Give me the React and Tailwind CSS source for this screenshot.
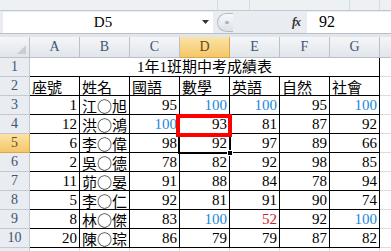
import React from "react";

const heads = ["座號", "姓名", "國語", "數學", "英語", "自然", "社會"];
const rows = [
  ["1", "江○旭", "95", "100", "100", "95", "100"],
  ["12", "洪○鴻", "100", "93", "81", "87", "92"],
  ["6", "李○偉", "98", "92", "97", "89", "66"],
  ["2", "吳○德", "78", "82", "92", "98", "85"],
  ["11", "茆○晏", "91", "88", "84", "78", "94"],
  ["5", "李○仁", "92", "81", "91", "90", "74"],
  ["8", "林○傑", "83", "100", "52", "92", "100"],
  ["20", "陳○琮", "86", "79", "79", "87", "82"],
];
const letters = ["A", "B", "C", "D", "E", "F", "G"];

function scoreColor(v) {
  const n = Number(v);
  if (n === 100) return "text-[#2388da]";
  if (n < 60) return "text-[#c4262b]";
  return "text-black";
}

function RowHead({ n, active }) {
  return (
    <div
      className={`w-[30px] shrink-0 border-r border-b flex items-center justify-center text-[14px] leading-none ${
        active
          ? "bg-gradient-to-b from-[#fbe3a6] to-[#f4c766] border-[#dca646] text-[#6b4a17]"
          : "bg-[#e9ecf0] border-[#c3c9d1] text-[#3d5674]"
      }`}
    >
      {n}
    </div>
  );
}

export default function App() {
  return (
    <div className="w-[391px] h-[251px] overflow-hidden bg-white font-['Liberation_Serif','Noto_Sans_CJK_TC',serif]">
      {/* ribbon edge */}
      <div className="h-[11px] bg-[#eef1f4] border-b border-[#c2c9d2] flex">
        <div className="w-[218px] border-r border-[#d6dbe1]" />
        <div className="w-[32px] border-r border-[#d6dbe1]" />
        <div className="w-[100px] border-r border-[#d6dbe1]" />
        <div className="w-[30px] border-r border-[#d6dbe1]" />
      </div>

      {/* formula bar */}
      <div className="h-[22px] bg-[#e9ecf0] flex items-center">
        <div className="ml-[3px] w-[210px] h-[21px] bg-white flex items-center">
          <div className="flex-1 text-center text-[15px] leading-none pl-[2px]">D5</div>
          <svg width="9" height="6" viewBox="0 0 9 6" className="mr-[3px]">
            <path d="M1 1h7L4.5 5z" fill="#333" />
          </svg>
        </div>
        <div className="ml-[4px] w-[90px] h-[21px] flex items-center">
          <div className="w-[16px] h-[19px] rounded-l-full border border-r-0 border-[#b4bcc6] bg-gradient-to-b from-[#f7f8fa] to-[#dde2e8] flex items-center justify-center">
            <div className="w-[4px] h-[3px] rounded-full bg-[#aab2bc] ml-[3px]" />
          </div>
          <div className="flex-1" />
          <span className="italic font-bold text-[12px] leading-none text-[#333] mr-[7px] tracking-[-1px]">fx</span>
        </div>
        <div className="flex-1 h-[21px] bg-white flex items-center pl-[12px] text-[16px] leading-none">92</div>
      </div>

      <div className="h-[4px] bg-[#e2e6eb] border-t border-[#b8c0ca]" />

      {/* sheet */}
      <div className="relative">
        {/* column headers */}
        <div className="flex h-[21px]">
          <div className="w-[30px] shrink-0 border-r border-b border-[#b9c1cc] bg-gradient-to-b from-[#f5f6f8] to-[#e1e5ea] flex items-end justify-end p-[3px]">
            <svg width="9" height="9" viewBox="0 0 9 9">
              <path d="M9 0V9H0z" fill="#c9ced5" />
            </svg>
          </div>
          {letters.map((l) => (
            <div
              key={l}
              className={`w-[50px] shrink-0 border-r border-b flex items-center justify-center text-[14px] leading-none ${
                l === "D"
                  ? "bg-gradient-to-b from-[#fbe3a6] to-[#f4c766] border-[#dca646] text-[#6b4a17]"
                  : "bg-gradient-to-b from-[#f5f6f8] to-[#e1e5ea] border-[#b9c1cc] text-[#3d5674]"
              }`}
            >
              {l}
            </div>
          ))}
          <div className="w-[11px] shrink-0 border-b border-[#b9c1cc] bg-gradient-to-b from-[#f5f6f8] to-[#e1e5ea]" />
        </div>

        {/* row 1: title */}
        <div className="flex h-[19px]">
          <RowHead n="1" />
          <div className="w-[350px] shrink-0 border-r border-b border-black flex items-center justify-center text-[15px] leading-none">
            1年1班期中考成績表
          </div>
          <div className="w-[11px] shrink-0 border-b border-[#dadcdd]" />
        </div>

        {/* row 2: headings */}
        <div className="flex h-[19px]">
          <RowHead n="2" />
          {heads.map((h) => (
            <div
              key={h}
              className="w-[50px] shrink-0 border-r border-b border-black flex items-center pl-[2px] text-[15px] leading-none font-['Noto_Sans_CJK_TC',sans-serif]"
            >
              {h}
            </div>
          ))}
          <div className="w-[11px] shrink-0 border-b border-[#dadcdd]" />
        </div>

        {rows.map((r, i) => (
          <div key={i} className="flex h-[19px]">
            <RowHead n={String(i + 3)} active={i + 3 === 5} />
            {r.map((v, j) =>
              j === 1 ? (
                <div
                  key={j}
                  className="w-[50px] shrink-0 border-r border-b border-black flex items-center pl-[2px] text-[15px] leading-none font-['Noto_Sans_CJK_TC',sans-serif]"
                >
                  {v}
                </div>
              ) : (
                <div
                  key={j}
                  className={`w-[50px] shrink-0 border-r border-b border-black flex items-center justify-end pr-[2px] text-[15px] leading-none ${
                    j === 0 ? "text-black" : scoreColor(v)
                  }`}
                >
                  {v}
                </div>
              )
            )}
            <div className="w-[11px] shrink-0 border-b border-[#dadcdd]" />
          </div>
        ))}

        {/* row 11 (cut off at the window edge) */}
        <div className="flex h-[19px]">
          <RowHead n="" />
          {letters.map((l) => (
            <div key={l} className="w-[50px] shrink-0 border-r border-[#dadcdd]" />
          ))}
        </div>

        {/* active cell D5 */}
        <div className="absolute left-[178px] top-[96px] w-[53px] h-[21px] border-2 border-black" />
        <div className="absolute left-[227px] top-[113px] w-[6px] h-[6px] bg-black border border-white" />

        {/* red highlight around D4 */}
        <div className="absolute left-[176px] top-[77px] w-[56px] h-[23px] border-4 border-[#ff0000]" />
      </div>
    </div>
  );
}
